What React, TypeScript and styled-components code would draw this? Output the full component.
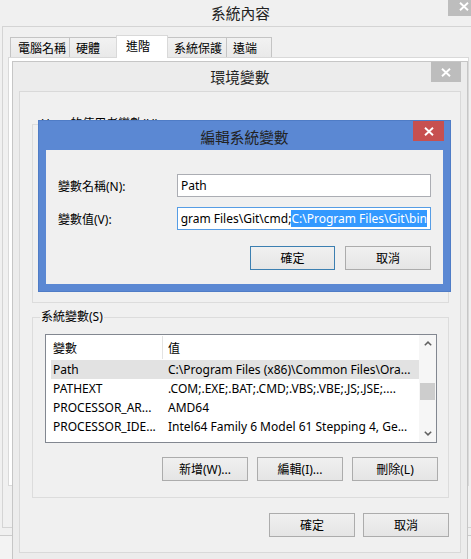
import React from "react";
import styled, { createGlobalStyle } from "styled-components";

const GlobalStyle = createGlobalStyle`
  * { box-sizing: border-box; }
  html, body { margin: 0; padding: 0; background: #f3f3f3; }
  body {
    font-family: "Noto Sans", "Noto Sans CJK TC", sans-serif;
    font-size: 12px;
    color: #000;
  }
`;

const Desktop = styled.div`
  position: relative;
  width: 471px;
  height: 559px;
  overflow: hidden;
  background: #f3f3f3;
`;

const Window = styled.div<{
  $left: number;
  $top: number;
  $w: number;
  $h: number;
  $frame: string;
  $edge: string;
  $pad: number;
}>`
  position: absolute;
  left: ${(p) => p.$left}px;
  top: ${(p) => p.$top}px;
  width: ${(p) => p.$w}px;
  height: ${(p) => p.$h}px;
  background: ${(p) => p.$frame};
  border: 1px solid ${(p) => p.$edge};
  padding: 0 ${(p) => p.$pad}px ${(p) => p.$pad}px;
  display: flex;
  flex-direction: column;
`;

const TitleBar = styled.div<{ $h: number }>`
  height: ${(p) => p.$h}px;
  flex-shrink: 0;
  display: grid;
  grid-template-columns: 1fr auto 1fr;
  align-items: start;
`;

const TitleText = styled.div<{ $pt: number }>`
  grid-column: 2;
  padding-top: ${(p) => p.$pt}px;
  font-family: "Noto Sans CJK TC", sans-serif;
  font-size: 14.7px;
  line-height: 20px;
  color: #222;
  white-space: nowrap;
`;

const CloseButton = styled.div<{ $bg: string; $w: number; $mr: number }>`
  grid-column: 3;
  justify-self: end;
  width: ${(p) => p.$w}px;
  height: 20px;
  margin-right: ${(p) => p.$mr}px;
  background: ${(p) => p.$bg};
  display: flex;
  align-items: center;
  justify-content: center;
`;

const CloseGlyph = () => (
  <svg width="10" height="9" viewBox="0 0 10 9">
    <path d="M1 0.8 L9 8.2 M9 0.8 L1 8.2" stroke="#fff" strokeWidth="1.9" fill="none" />
  </svg>
);

/* ---------- outer window (系統內容) ---------- */

const OuterClient = styled.div`
  flex: 1;
  background: #f0f0f0;
  border: 1px solid #d4d4d4;
  padding: 8px 0 0 5px;
  display: flex;
  flex-direction: column;
`;

const TabRow = styled.div`
  height: 22px;
  margin-left: 2px;
  display: flex;
  align-items: flex-end;
`;

const Tab = styled.div<{ $w: number; $pl: number; $active?: boolean; $first?: boolean }>`
  position: relative;
  z-index: ${(p) => (p.$active ? 1 : 0)};
  width: ${(p) => p.$w}px;
  height: ${(p) => (p.$active ? 23 : 20)}px;
  margin-left: ${(p) => (p.$active ? -2 : p.$first ? 0 : -1)}px;
  margin-right: ${(p) => (p.$active ? -2 : 0)}px;
  margin-bottom: ${(p) => (p.$active ? -1 : 0)}px;
  padding: 1px 0 0 ${(p) => p.$pl}px;
  border: 1px solid ${(p) => (p.$active ? "#d9d9d9" : "#c4c4c4")};
  border-bottom: none;
  background: ${(p) => (p.$active ? "#ffffff" : "linear-gradient(#f2f2f2, #e9e9e9)")};
  font-family: "Noto Sans CJK TC", sans-serif;
  font-size: 12px;
  line-height: 18px;
  white-space: nowrap;
`;

const TabPanel = styled.div`
  width: 461px;
  height: 429px;
  flex-shrink: 0;
  background: #ffffff;
  border: 1px solid #d9d9d9;
`;

/* ---------- env window (環境變數) ---------- */

const EnvClient = styled.div`
  flex: 1;
  background: #f0f0f0;
  border: 1px solid #d9d9d9;
  padding: 24px 11px 14px 12px;
  display: flex;
  flex-direction: column;
`;

const Group = styled.fieldset<{ $h?: number; $mt?: number }>`
  margin: ${(p) => p.$mt ?? 0}px 0 0 0;
  min-width: 0;
  ${(p) => (p.$h ? `height: ${p.$h}px;` : "")}
  border: 1px solid #dcdcdc;
  padding: 9px 10px 16px 7px;
  display: flex;
  flex-direction: column;
`;

const GroupLabel = styled.legend`
  padding: 0 1px;
  font-size: 12px;
  line-height: 16px;
  white-space: nowrap;
`;

const ListBox = styled.div`
  width: 392px;
  height: 109px;
  margin-left: 5px;
  background: #ffffff;
  border: 1px solid #828790;
  padding-left: 5px;
  display: flex;
`;

const ListBody = styled.div`
  flex: 1;
  min-width: 0;
  display: flex;
  flex-direction: column;
`;

const HeaderRow = styled.div`
  height: 25px;
  flex-shrink: 0;
  display: flex;
  align-items: stretch;
`;

const HeaderCell = styled.div<{ $w?: number; $pl: number; $divider?: boolean }>`
  ${(p) => (p.$w ? `width: ${p.$w}px; flex-shrink: 0;` : "flex: 1;")}
  padding-left: ${(p) => p.$pl}px;
  margin: 1px 0 1px 0;
  border-right: ${(p) => (p.$divider ? "1px solid #e3e3e3" : "none")};
  display: flex;
  align-items: center;
  font-family: "Noto Sans CJK TC", sans-serif;
  font-size: 12px;
`;

const Row = styled.div<{ $selected?: boolean }>`
  height: 19px;
  flex-shrink: 0;
  display: flex;
  align-items: center;
  background: ${(p) => (p.$selected ? "#e2e2e2" : "transparent")};
  white-space: nowrap;
`;

const Cell = styled.div<{ $w?: number; $pl: number }>`
  ${(p) => (p.$w ? `width: ${p.$w}px; flex-shrink: 0;` : "flex: 1; min-width: 0;")}
  padding-left: ${(p) => p.$pl}px;
  white-space: nowrap;
  line-height: 19px;
`;

const ScrollBar = styled.div`
  width: 17px;
  flex-shrink: 0;
  background: #f6f6f6;
  display: flex;
  flex-direction: column;
`;

const ScrollArrow = styled.div<{ $bottom?: boolean }>`
  height: 17px;
  flex-shrink: 0;
  margin-top: ${(p) => (p.$bottom ? "auto" : "0")};
  display: flex;
  align-items: center;
  justify-content: center;
`;

const ScrollThumb = styled.div<{ $top: number }>`
  width: 15px;
  height: 17px;
  margin: ${(p) => p.$top}px 0 0 1px;
  background: #cdcdcd;
`;

const Chevron = ({ up }: { up?: boolean }) => (
  <svg width="8" height="5" viewBox="0 0 8 5">
    <path
      d={up ? "M0.8 4.3 L4 1.1 L7.2 4.3" : "M0.8 0.7 L4 3.9 L7.2 0.7"}
      stroke="#606060"
      strokeWidth="1.5"
      fill="none"
    />
  </svg>
);

const ButtonRow = styled.div<{ $mt: number; $gap: number }>`
  margin-top: ${(p) => p.$mt}px;
  display: flex;
  justify-content: flex-end;
  gap: ${(p) => p.$gap}px;
`;

const Button = styled.button<{ $w: number; $default?: boolean }>`
  width: ${(p) => p.$w}px;
  height: 24px;
  margin: 0;
  padding: 0;
  border: 1px solid ${(p) => (p.$default ? "#3c7fb1" : "#acacac")};
  background: linear-gradient(#f0f0f0, #e5e5e5);
  font-family: "Noto Sans", "Noto Sans CJK TC", sans-serif;
  font-size: 12px;
  color: #000;
  display: flex;
  align-items: center;
  justify-content: center;
  white-space: nowrap;
`;

/* ---------- edit window (編輯系統變數) ---------- */

const EditClient = styled.div`
  flex: 1;
  background: #f0f0f0;
  padding: 24px 12px 14px 12px;
  display: flex;
  flex-direction: column;
`;

const FieldRow = styled.div<{ $mt?: number }>`
  margin-top: ${(p) => p.$mt ?? 0}px;
  display: flex;
  align-items: center;
`;

const FieldLabel = styled.div`
  width: 119px;
  flex-shrink: 0;
  font-size: 12px;
  white-space: nowrap;
`;

const TextField = styled.div<{ $focused?: boolean }>`
  width: 254px;
  height: 23px;
  background: #ffffff;
  border: 1px solid ${(p) => (p.$focused ? "#569de5" : "#abadb3")};
  padding: 0 3px;
  display: flex;
  align-items: center;
  justify-content: ${(p) => (p.$focused ? "flex-end" : "flex-start")};
  white-space: nowrap;
  font-size: 12px;
`;

const FieldText = styled.span`
  line-height: 17px;
`;

const Selected = styled.span`
  background: #3399ff;
  color: #ffffff;
`;

const pathVisible = "gram Files\\Git\\cmd;";
const pathSelected = "C:\\Program Files\\Git\\bin";

const rows = [
  { name: "Path", value: "C:\\Program Files (x86)\\Common Files\\Ora...", selected: true },
  { name: "PATHEXT", value: ".COM;.EXE;.BAT;.CMD;.VBS;.VBE;.JS;.JSE;...." },
  { name: "PROCESSOR_AR...", value: "AMD64" },
  { name: "PROCESSOR_IDE...", value: "Intel64 Family 6 Model 61 Stepping 4, Ge..." },
];

export default function App() {
  return (
    <>
      <GlobalStyle />
      <Desktop>
        {/* 系統內容 */}
        <Window $left={-6} $top={-5} $w={493} $h={541} $frame="#f0f0f0" $edge="#cccccc" $pad={7}>
          <TitleBar $h={30}>
            <TitleText $pt={7}>系統內容</TitleText>
            <CloseButton $bg="#bdbdbd" $w={31} $mr={0}>
              <CloseGlyph />
            </CloseButton>
          </TitleBar>
          <OuterClient>
            <TabRow>
              <Tab $w={60} $pl={7} $first>電腦名稱</Tab>
              <Tab $w={49} $pl={6}>硬體</Tab>
              <Tab $w={52} $pl={9} $active>進階</Tab>
              <Tab $w={62} $pl={8}>系統保護</Tab>
              <Tab $w={46} $pl={6}>遠端</Tab>
            </TabRow>
            <TabPanel />
          </OuterClient>
        </Window>

        {/* 環境變數 */}
        <Window $left={12} $top={61} $w={456} $h={499} $frame="#ececec" $edge="#c6c6c6" $pad={6}>
          <TitleBar $h={29}>
            <TitleText $pt={5}>環境變數</TitleText>
            <CloseButton $bg="#bdbdbd" $w={30} $mr={0}>
              <CloseGlyph />
            </CloseButton>
          </TitleBar>
          <EnvClient>
            <Group $h={187}>
              <GroupLabel>User 的使用者變數(U)</GroupLabel>
            </Group>
            <Group $mt={6}>
              <GroupLabel>系統變數(S)</GroupLabel>
              <ListBox>
                <ListBody>
                  <HeaderRow>
                    <HeaderCell $w={112} $pl={2} $divider>
                      變數
                    </HeaderCell>
                    <HeaderCell $pl={5}>值</HeaderCell>
                  </HeaderRow>
                  {rows.map((r) => (
                    <Row key={r.name} $selected={r.selected}>
                      <Cell $w={112} $pl={2}>
                        {r.name}
                      </Cell>
                      <Cell $pl={5}>{r.value}</Cell>
                    </Row>
                  ))}
                </ListBody>
                <ScrollBar>
                  <ScrollArrow>
                    <Chevron up />
                  </ScrollArrow>
                  <ScrollThumb $top={31} />
                  <ScrollArrow $bottom>
                    <Chevron />
                  </ScrollArrow>
                </ScrollBar>
              </ListBox>
              <ButtonRow $mt={14} $gap={9}>
                <Button $w={86}>新增(W)...</Button>
                <Button $w={86}>編輯(I)...</Button>
                <Button $w={86}>刪除(L)</Button>
              </ButtonRow>
            </Group>
            <ButtonRow $mt={15} $gap={8}>
              <Button $w={86}>確定</Button>
              <Button $w={86}>取消</Button>
            </ButtonRow>
          </EnvClient>
        </Window>

        {/* 編輯系統變數 */}
        <Window $left={38} $top={120} $w={413} $h={172} $frame="#5b88d3" $edge="#4f7cc6" $pad={7}>
          <TitleBar $h={29}>
            <TitleText $pt={6}>編輯系統變數</TitleText>
            <CloseButton $bg="#c75050" $w={31} $mr={-1}>
              <CloseGlyph />
            </CloseButton>
          </TitleBar>
          <EditClient>
            <FieldRow>
              <FieldLabel>變數名稱(N):</FieldLabel>
              <TextField>
                <FieldText>Path</FieldText>
              </TextField>
            </FieldRow>
            <FieldRow $mt={10}>
              <FieldLabel>變數值(V):</FieldLabel>
              <TextField $focused>
                <FieldText>
                  {pathVisible}
                  <Selected>{pathSelected}</Selected>
                </FieldText>
              </TextField>
            </FieldRow>
            <ButtonRow $mt={16} $gap={10}>
              <Button $w={85} $default>
                確定
              </Button>
              <Button $w={86}>取消</Button>
            </ButtonRow>
          </EditClient>
        </Window>
      </Desktop>
    </>
  );
}
